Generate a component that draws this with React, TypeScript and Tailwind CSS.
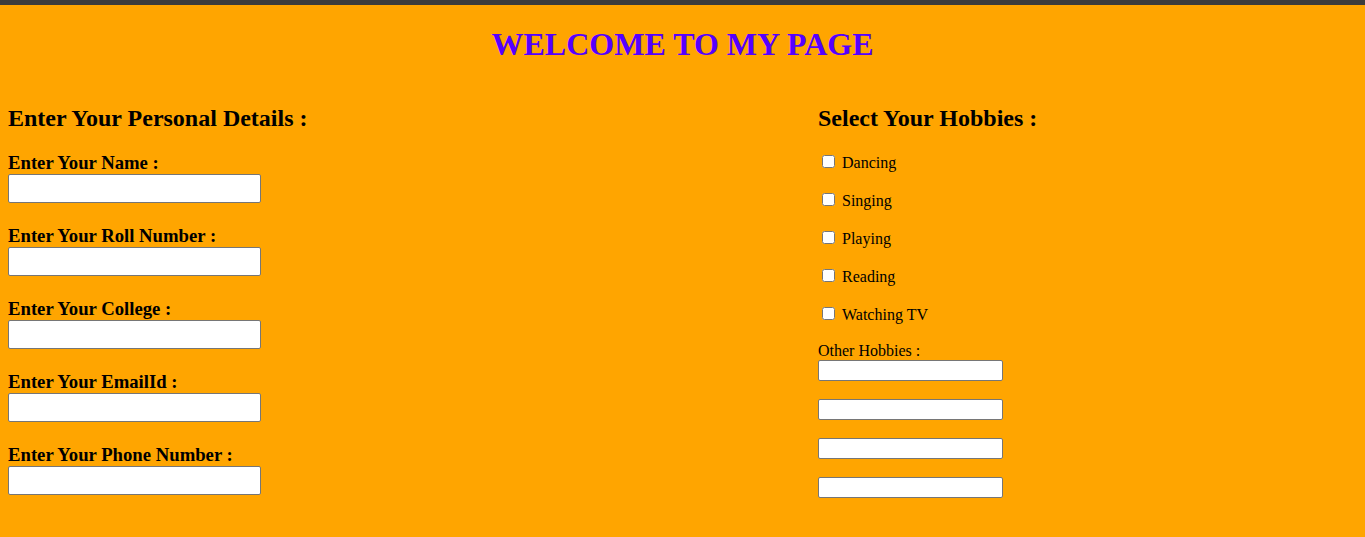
import React from "react";

const leftFields = [
  "Enter Your Name :",
  "Enter Your Roll Number :",
  "Enter Your College :",
  "Enter Your EmailId :",
  "Enter Your Phone Number :",
];

const hobbies = ["Dancing", "Singing", "Playing", "Reading", "Watching TV"];

export default function App() {
  return (
    <div
      className="w-[1365px] h-[537px] bg-[#ffa500] text-black overflow-hidden"
      style={{ fontFamily: '"Liberation Serif", "Times New Roman", serif' }}
    >
      <div className="h-[5px] bg-[#3c3c3c]" />
      <h1 className="mt-[21px] text-center text-[32px] leading-[37px] font-bold text-[#5500ff]">
        WELCOME TO MY PAGE
      </h1>
      <div className="grid grid-cols-[810px_1fr] pl-[8px] mt-[41px]">
        <div>
          <h2 className="text-[24px] leading-[28px] font-bold">
            Enter Your Personal Details :
          </h2>
          <div className="mt-[20px] flex flex-col gap-[22px]">
            {leftFields.map((f) => (
              <div key={f} className="flex flex-col">
                <label className="text-[18.72px] leading-[21px] font-bold mb-[1px]">{f}</label>
                <input
                  type="text"
                  className="w-[253px] h-[29px] bg-white border border-[#767676] rounded-[2px]"
                />
              </div>
            ))}
          </div>
        </div>
        <div>
          <h2 className="text-[24px] leading-[28px] font-bold">
            Select Your Hobbies :
          </h2>
          <div className="mt-[22px] flex flex-col gap-[20px]">
            {hobbies.map((h) => (
              <div key={h} className="flex items-start h-[18px]">
                <input
                  type="checkbox"
                  className="w-[13px] h-[13px] mt-[1px] ml-[4px] mr-[7px]"
                />
                <span className="text-[16px] leading-[18px]">{h}</span>
              </div>
            ))}
          </div>
          <div className="mt-[18px] text-[16px] leading-[18px]">Other Hobbies :</div>
          <div className="flex flex-col gap-[18px]">
            {[0, 1, 2, 3].map((i) => (
              <input
                key={i}
                type="text"
                className="w-[185px] h-[21px] bg-white border border-[#767676] rounded-[2px]"
              />
            ))}
          </div>
        </div>
      </div>
    </div>
  );
}
